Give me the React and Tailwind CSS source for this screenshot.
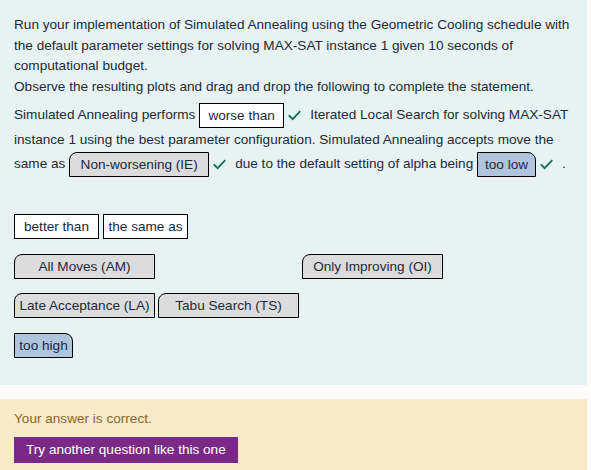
import React from "react";

const Tick = () => (
  <span className="inline-block align-middle ml-[4px] mr-[9px] w-[13px] h-[13px]">
    <svg viewBox="0 0 14 14" width="13" height="13" fill="none" stroke="#16735a" strokeWidth="2" strokeLinecap="square">
      <path d="M1.5 7.5 L5 11 L12.5 3" />
    </svg>
  </span>
);

const Drop = ({ children, kind }) => {
  const look =
    kind === "white"
      ? "bg-white w-[85px]"
      : kind === "gray"
      ? "bg-[#dcdcdc] w-[140px] rounded-tl-[8px]"
      : "bg-[#b0c4de] w-[59px] rounded-tr-[8px]";
  return (
    <span className={`inline-flex items-center justify-center align-middle h-[25px] border border-black whitespace-nowrap ${look}`}>
      {children}
    </span>
  );
};

const Item = ({ children, kind, hidden }) => {
  const look =
    kind === "white"
      ? "bg-white w-[85px]"
      : kind === "gray"
      ? "bg-[#dcdcdc] w-[141px] rounded-tl-[8px]"
      : "bg-[#b0c4de] w-[59px] rounded-tr-[8px]";
  return (
    <div className={`flex items-center justify-center h-[25px] border border-black whitespace-nowrap ${look} ${hidden ? "invisible" : ""}`}>
      {children}
    </div>
  );
};

export default function App() {
  return (
    <div className="min-h-screen bg-[#fcfbf9] text-[13.6px] text-[#1d2a3a]" style={{ fontFamily: '"Liberation Sans", Arial, sans-serif' }}>
      <div className="w-[587px] bg-[#e7f3f3] px-[14px] pt-[15px] pb-[27px]">
        <p className="leading-[20.6px]">
          Run your implementation of Simulated Annealing using the Geometric Cooling schedule with the default parameter settings for solving MAX-SAT instance 1 given 10 seconds of computational budget.
        </p>
        <p className="leading-[20.6px]">Observe the resulting plots and drag and drop the following to complete the statement.</p>
        <p className="mt-[6px] leading-[24px]">
          Simulated Annealing performs <Drop kind="white">worse than</Drop>
          <Tick />
          Iterated Local Search for solving MAX-SAT instance 1 using the best parameter configuration. Simulated Annealing accepts move the same as <Drop kind="gray">Non-worsening (IE)</Drop>
          <Tick />
          due to the default setting of alpha being <Drop kind="blue">too low</Drop>
          <Tick />.
        </p>

        <div className="mt-[37px] flex flex-col gap-[15px]">
          <div className="flex flex-wrap gap-x-[4px] gap-y-[14px]">
            <Item kind="white">better than</Item>
            <Item kind="white">the same as</Item>
            <Item kind="white" hidden>worse than</Item>
          </div>
          <div className="flex flex-wrap gap-x-[3px] gap-y-[14px]">
            <Item kind="gray">All Moves (AM)</Item>
            <Item kind="gray" hidden>Non-worsening (IE)</Item>
            <Item kind="gray">Only Improving (OI)</Item>
            <Item kind="gray">Late Acceptance (LA)</Item>
            <Item kind="gray">Tabu Search (TS)</Item>
          </div>
          <div className="flex flex-wrap gap-x-[4px] gap-y-[14px]">
            <Item kind="blue">too high</Item>
            <Item kind="blue" hidden>too low</Item>
          </div>
        </div>
      </div>

      <div className="mt-[14px] w-[587px] bg-[#f7ebc8] px-[14px] pt-[9px] pb-[10px]">
        <p className="text-[#8e662e] leading-[21px]">Your answer is correct.</p>
        <button className="mt-[8px] h-[26px] px-[12px] bg-[#7a2a85] text-white leading-[26px]">
          Try another question like this one
        </button>
      </div>
    </div>
  );
}
